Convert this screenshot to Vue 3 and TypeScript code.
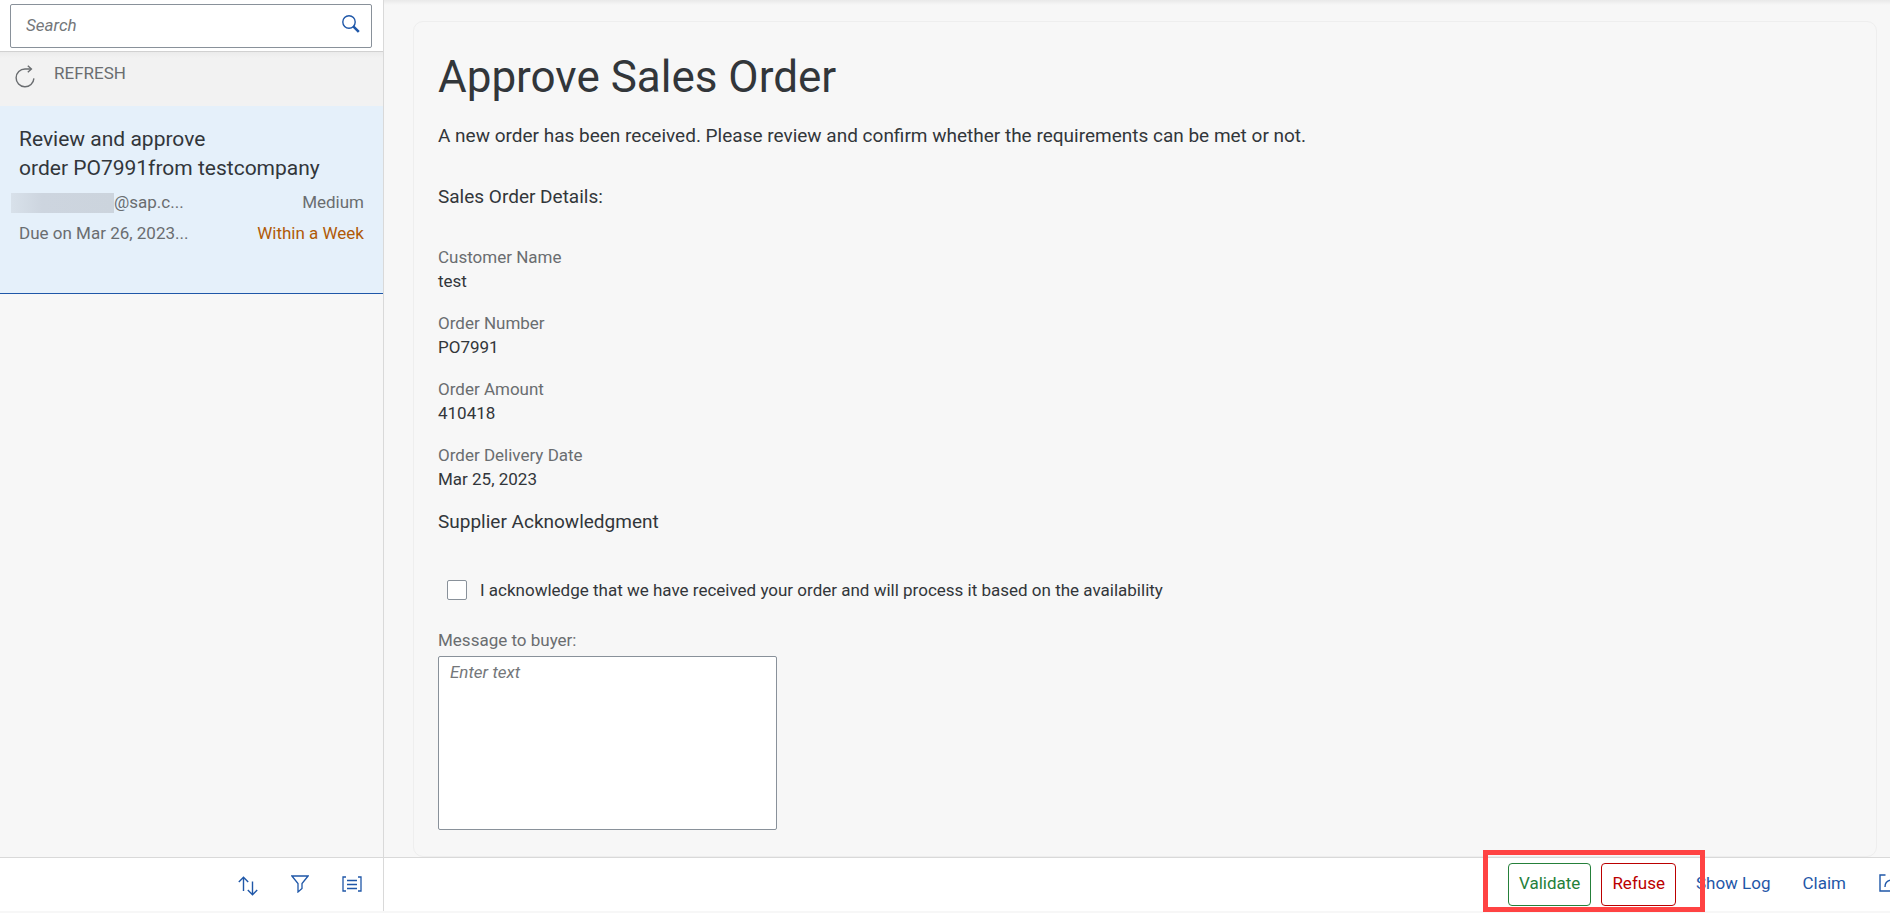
<script setup lang="ts">
import { ref } from 'vue'

interface Field {
  label: string
  value: string
}

const fields: Field[] = [
  { label: 'Customer Name', value: 'test' },
  { label: 'Order Number', value: 'PO7991' },
  { label: 'Order Amount', value: '410418' },
  { label: 'Order Delivery Date', value: 'Mar 25, 2023' },
]

const query = ref('')
const acknowledged = ref(false)
const message = ref('')
</script>

<template>
  <div class="page">
    <aside class="sidebar">
      <div class="search-bar">
        <div class="search-box">
          <input v-model="query" class="search-input" type="text" placeholder="Search" aria-label="Search" />
          <button class="search-button" type="button" aria-label="Start search">
            <svg width="18" height="18" viewBox="0 0 18 18" fill="none" stroke="currentColor">
              <circle cx="7" cy="7" r="6.2" stroke-width="1.4" />
              <path d="M11.3 11.3 L16.8 16.8" stroke-width="2.6" />
            </svg>
          </button>
        </div>
      </div>
      <button class="refresh" type="button">
        <svg width="20" height="23" viewBox="0 0 20 23" fill="none" stroke="currentColor" stroke-width="1.4">
          <path d="M16 4 H10 A8.9 8.9 0 1 0 18.9 13.4" />
          <path d="M12.8 0.8 L16.4 4 L12.8 7.2" />
        </svg>
        <span>REFRESH</span>
      </button>
      <ul class="tasks">
        <li class="task">
          <h2 class="task-title">Review and approve<br />order PO7991from testcompany</h2>
          <div class="task-row">
            <span class="sender"><span class="redacted"></span>@sap.c...</span>
            <span>Medium</span>
          </div>
          <div class="task-row">
            <span>Due on Mar 26, 2023...</span>
            <span class="warning">Within a Week</span>
          </div>
        </li>
      </ul>
      <footer class="side-footer">
        <button class="icon-button" type="button" aria-label="Sort">
          <svg width="20" height="20" viewBox="0 0 20 20" fill="none" stroke="currentColor" stroke-width="1.4">
            <path d="M5.5 15 V1.5 M0.8 6 L5.5 1.3 L10.2 6" />
            <path d="M14.5 5.5 V18.5 M9.8 14 L14.5 18.7 L19.2 14" />
          </svg>
        </button>
        <button class="icon-button raised" type="button" aria-label="Filter">
          <svg width="18" height="18" viewBox="0 0 18 18" fill="none" stroke="currentColor" stroke-width="1.3">
            <path d="M0.9 1 H17.1 L11 8.5 V13.5 L7 17 V8.5 Z" />
          </svg>
        </button>
        <button class="icon-button raised" type="button" aria-label="Group">
          <svg width="20" height="16" viewBox="0 0 20 16" fill="none" stroke="currentColor" stroke-width="1.3">
            <path d="M4 1 H1 V15 H4 M16 1 H19 V15 H16 M5 4.5 H15 M5 8.5 H15 M5 12.5 H15" />
          </svg>
        </button>
      </footer>
    </aside>

    <main class="main">
      <section class="panel">
        <h1 class="title">Approve Sales Order</h1>
        <p class="intro">
          A new order has been received. Please review and confirm whether the requirements can be met or not.
        </p>
        <h3 class="heading">Sales Order Details:</h3>
        <dl class="fields">
          <div v-for="field in fields" :key="field.label">
            <dt>{{ field.label }}</dt>
            <dd>{{ field.value }}</dd>
          </div>
        </dl>
        <h3 class="heading supplier">Supplier Acknowledgment</h3>
        <label class="acknowledge">
          <input v-model="acknowledged" type="checkbox" />
          <span>I acknowledge that we have received your order and will process it based on the availability</span>
        </label>
        <label class="message-label" for="message">Message to buyer:</label>
        <textarea id="message" v-model="message" class="message" placeholder="Enter text"></textarea>
      </section>
      <footer class="main-footer">
        <div class="decision">
          <button class="outlined accept" type="button">Validate</button>
          <button class="outlined reject" type="button">Refuse</button>
        </div>
        <button class="link-button log" type="button">Show Log</button>
        <button class="link-button" type="button">Claim</button>
        <button class="link-button share" type="button" aria-label="Share">
          <svg width="20" height="18" viewBox="0 0 20 18" fill="none" stroke="currentColor" stroke-width="1.4">
            <path d="M6.5 1 H1 V17 H15 V13" />
            <path d="M6 13 C6 8 9 6 14 6 M11.5 2 L16 6 L11.5 10" />
          </svg>
        </button>
      </footer>
    </main>
  </div>
</template>

<style>
body {
  margin: 0;
}
</style>

<style scoped>
.page {
  display: grid;
  grid-template-columns: 384px minmax(0, 1fr);
  min-height: 100vh;
  box-sizing: border-box;
  overflow: hidden;
  padding-bottom: 2px;
  background: #f7f7f7;
  color: #32363a;
  font-family: Roboto, 'Noto Sans', sans-serif;
  font-size: 17px;
  line-height: 24px;
}

.page * {
  box-sizing: border-box;
}

button,
input,
textarea {
  font: inherit;
  margin: 0;
}

button {
  padding: 0;
  border: 0;
  background: none;
  cursor: pointer;
}

svg {
  display: block;
}

h1,
h2,
h3,
p,
dl,
dd,
ul {
  margin: 0;
  padding: 0;
  font-weight: 400;
}

.sidebar {
  display: flex;
  flex-direction: column;
  border-right: 1px solid #d9d9d9;
}

.search-bar {
  padding: 4px 11px 3px 10px;
  border-bottom: 1px solid #d1d1d1;
  background: #fff;
}

.search-box {
  display: flex;
  align-items: center;
  height: 44px;
  border: 1px solid #89919a;
  border-radius: 2px;
}

.search-input {
  flex: 1;
  min-width: 0;
  height: 40px;
  padding: 0 15px 2px;
  border: 0;
  outline: 0;
  background: transparent;
  color: #32363a;
}

::placeholder {
  color: #74777a;
  font-style: italic;
  opacity: 1;
}

.search-button {
  padding: 0 11px 4px;
  color: #1f57a8;
}

.refresh {
  display: flex;
  align-items: flex-start;
  gap: 19px;
  height: 54px;
  padding: 9px 15px;
  background: linear-gradient(#ebebeb, #f2f2f2 6px);
  color: #6a6d70;
}

.refresh svg {
  margin-top: 4px;
}

.tasks {
  flex: 1;
  list-style: none;
}

.task {
  padding: 19px 19px 44px;
  border-bottom: 1px solid #1f57a8;
  background: #e5f0fa;
}

.task-title {
  margin-bottom: 4px;
  font-size: 21px;
  line-height: 29px;
}

.task-row {
  display: flex;
  justify-content: space-between;
  color: #6a6d70;
  line-height: 31px;
}

.sender {
  display: flex;
  align-items: center;
  margin-left: -8px;
}

.redacted {
  width: 103px;
  height: 20px;
  background: linear-gradient(90deg, #d8e1ea, #cdd5df 30%, #ccd4dd);
}

.warning {
  color: #b05a07;
}

.side-footer,
.main-footer {
  display: flex;
  height: 54px;
  border-top: 1px solid #d9d9d9;
  background: #fff;
}

.side-footer {
  justify-content: flex-end;
  align-items: center;
  gap: 33px;
  padding: 3px 21px 0 0;
  color: #1f57a8;
}

.icon-button {
  color: inherit;
}

.raised {
  padding-bottom: 5px;
}

.main {
  display: flex;
  flex-direction: column;
  min-width: 0;
  background: linear-gradient(#e9e9e9, #f7f7f7 5px);
}

.panel {
  display: flex;
  flex: 1;
  flex-direction: column;
  align-items: flex-start;
  margin: 21px 13px 0 29px;
  padding: 30px 24px 20px;
  border: 1px solid #eee;
  border-radius: 10px;
}

.title {
  font-size: 44px;
  line-height: 50px;
}

.intro {
  margin-top: 22px;
  font-size: 19px;
}

.heading {
  margin-top: 37px;
  font-size: 19px;
}

.fields {
  display: grid;
  gap: 18px;
  margin-top: 36px;
}

dt {
  color: #6a6d70;
}

.supplier {
  margin-top: 19px;
}

.acknowledge {
  display: flex;
  align-items: center;
  gap: 13px;
  margin: 44px 0 26px 9px;
}

.acknowledge input {
  appearance: none;
  width: 20px;
  height: 20px;
  border: 1px solid #89919a;
  border-radius: 2px;
  background: #fff;
}

.acknowledge input:checked {
  background: #1f57a8;
}

.message-label {
  color: #6a6d70;
}

.message {
  width: 339px;
  height: 174px;
  margin-top: 4px;
  padding: 3px 11px;
  border: 1px solid #89919a;
  border-radius: 2px;
  outline: 0;
  background: #fff;
  color: #32363a;
  resize: none;
}

.main-footer {
  justify-content: flex-end;
  align-items: flex-start;
  padding-top: 5px;
}

.decision {
  position: relative;
  display: flex;
  gap: 10px;
}

.decision::after {
  content: '';
  position: absolute;
  inset: -13px -29px -6px -25px;
  border: 5px solid #ff4343;
  pointer-events: none;
}

.outlined {
  height: 43px;
  padding: 0 10px 3px;
  border: 1px solid currentColor;
  border-radius: 4px;
  background: #fff;
}

.accept {
  color: #25803a;
}

.reject {
  color: #b00;
}

.link-button {
  height: 43px;
  padding: 0 12px 3px;
  color: #1f57a8;
}

.log {
  margin: 0 8px;
}

.share {
  margin: 0 -21px 0 9px;
}
</style>
